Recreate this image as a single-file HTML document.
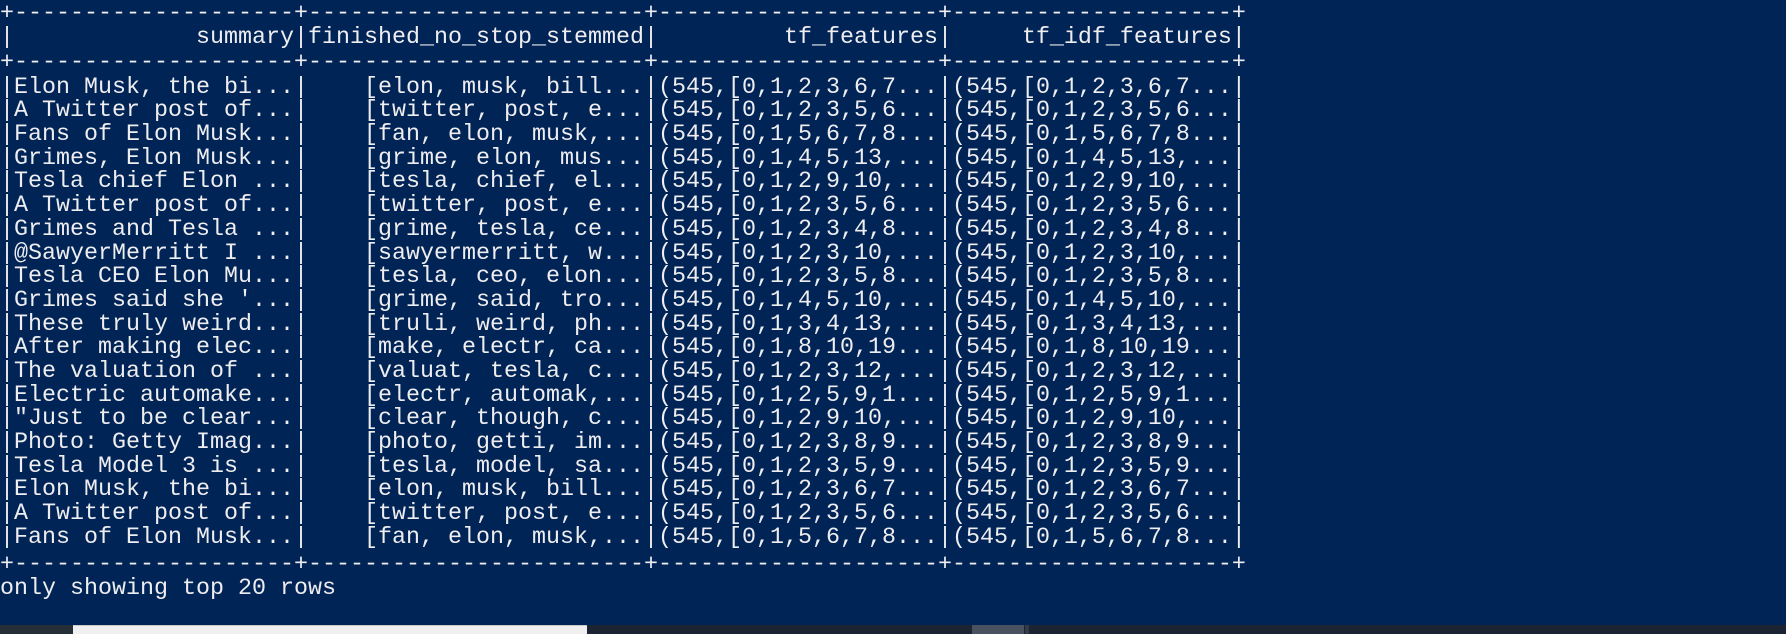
<!DOCTYPE html>
<html><head><meta charset="utf-8"><style>
html,body{margin:0;padding:0;}
body{width:1786px;height:634px;background:#012456;overflow:hidden;position:relative;}
pre{position:absolute;left:0;margin:0;font-family:"Liberation Mono",monospace;font-size:23.33px;line-height:23.8px;color:#eeedf0;white-space:pre;}
.bar{position:absolute;top:625px;height:9px;}
</style></head><body>
<pre style="top:3px">+--------------------+------------------------+--------------------+--------------------+
|             summary|finished_no_stop_stemmed|         tf_features|     tf_idf_features|</pre>
<pre style="top:52px">+--------------------+------------------------+--------------------+--------------------+</pre>
<pre style="top:76.7px;line-height:23.68px">|Elon Musk, the bi...|    [elon, musk, bill...|(545,[0,1,2,3,6,7...|(545,[0,1,2,3,6,7...|
|A Twitter post of...|    [twitter, post, e...|(545,[0,1,2,3,5,6...|(545,[0,1,2,3,5,6...|
|Fans of Elon Musk...|    [fan, elon, musk,...|(545,[0,1,5,6,7,8...|(545,[0,1,5,6,7,8...|
|Grimes, Elon Musk...|    [grime, elon, mus...|(545,[0,1,4,5,13,...|(545,[0,1,4,5,13,...|
|Tesla chief Elon ...|    [tesla, chief, el...|(545,[0,1,2,9,10,...|(545,[0,1,2,9,10,...|
|A Twitter post of...|    [twitter, post, e...|(545,[0,1,2,3,5,6...|(545,[0,1,2,3,5,6...|
|Grimes and Tesla ...|    [grime, tesla, ce...|(545,[0,1,2,3,4,8...|(545,[0,1,2,3,4,8...|
|@SawyerMerritt I ...|    [sawyermerritt, w...|(545,[0,1,2,3,10,...|(545,[0,1,2,3,10,...|
|Tesla CEO Elon Mu...|    [tesla, ceo, elon...|(545,[0,1,2,3,5,8...|(545,[0,1,2,3,5,8...|
|Grimes said she '...|    [grime, said, tro...|(545,[0,1,4,5,10,...|(545,[0,1,4,5,10,...|
|These truly weird...|    [truli, weird, ph...|(545,[0,1,3,4,13,...|(545,[0,1,3,4,13,...|
|After making elec...|    [make, electr, ca...|(545,[0,1,8,10,19...|(545,[0,1,8,10,19...|
|The valuation of ...|    [valuat, tesla, c...|(545,[0,1,2,3,12,...|(545,[0,1,2,3,12,...|
|Electric automake...|    [electr, automak,...|(545,[0,1,2,5,9,1...|(545,[0,1,2,5,9,1...|
|"Just to be clear...|    [clear, though, c...|(545,[0,1,2,9,10,...|(545,[0,1,2,9,10,...|
|Photo: Getty Imag...|    [photo, getti, im...|(545,[0,1,2,3,8,9...|(545,[0,1,2,3,8,9...|
|Tesla Model 3 is ...|    [tesla, model, sa...|(545,[0,1,2,3,5,9...|(545,[0,1,2,3,5,9...|
|Elon Musk, the bi...|    [elon, musk, bill...|(545,[0,1,2,3,6,7...|(545,[0,1,2,3,6,7...|
|A Twitter post of...|    [twitter, post, e...|(545,[0,1,2,3,5,6...|(545,[0,1,2,3,5,6...|
|Fans of Elon Musk...|    [fan, elon, musk,...|(545,[0,1,5,6,7,8...|(545,[0,1,5,6,7,8...|</pre>
<pre style="top:553.8px">+--------------------+------------------------+--------------------+--------------------+</pre>
<pre style="top:578px">only showing top 20 rows</pre>
<div class="bar" style="left:0;width:1786px;background:#1c2333;"></div>
<div class="bar" style="left:0;width:73px;background:#262e38;"></div>
<div class="bar" style="left:73px;width:514px;background:#f0f0f0;border-top:1px solid #c8c8c8;box-sizing:border-box;"></div>
<div class="bar" style="left:972px;width:52px;background:#4a5262;"></div>
<div class="bar" style="left:1025px;width:4px;background:#343b48;"></div>
</body></html>
